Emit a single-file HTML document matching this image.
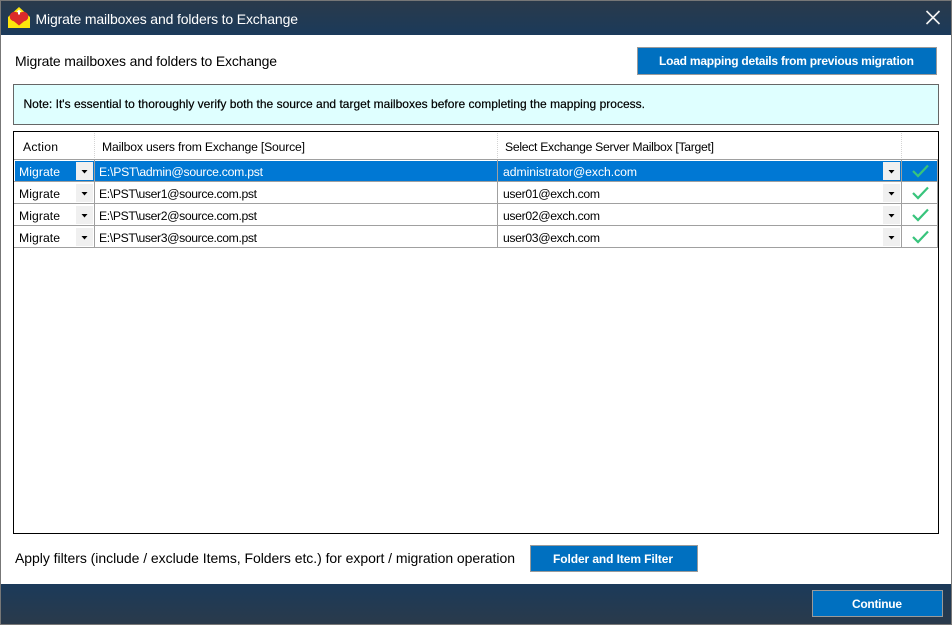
<!DOCTYPE html>
<html><head><meta charset="utf-8"><style>
html,body{margin:0;padding:0;background:#fff;width:952px;height:625px;overflow:hidden}
svg{display:block}
text{font-family:"Liberation Sans",sans-serif;font-size:12.2px;fill:#000}
.t{font-size:14px}
.b{font-size:12px;font-weight:bold;fill:#fff}
.w{fill:#fff}
</style></head><body>
<svg width="952" height="625" viewBox="0 0 952 625" xmlns="http://www.w3.org/2000/svg">
<defs>
<linearGradient id="g1" x1="0" y1="0" x2="0" y2="1"><stop offset="0" stop-color="#2a3a4b"/><stop offset="1" stop-color="#1b3a5a"/></linearGradient>
<linearGradient id="g2" x1="0" y1="0" x2="0" y2="1"><stop offset="0" stop-color="#1b3a5a"/><stop offset="1" stop-color="#2a3a4b"/></linearGradient>
</defs>
<rect width="952" height="625" fill="#fff"/>
<rect x="0.5" y="0.5" width="951" height="624" fill="none" stroke="#777"/>
<rect x="1" y="1" width="950" height="34" fill="url(#g1)"/>
<rect x="1" y="584" width="950" height="40" fill="url(#g2)"/>
<!-- icon -->
<polygon points="8,17 19,7 30,17 30,28 8,28" fill="#fde50c"/>
<circle cx="14.5" cy="16.5" r="4.8" fill="#dc2b2b"/>
<circle cx="23.5" cy="16.5" r="4.8" fill="#dc2b2b"/>
<polygon points="10,18 28,18 19,25.5" fill="#dc2b2b"/>
<rect x="14" y="12.5" width="10" height="6" fill="#dc2b2b"/>
<polygon points="19,9.5 21.4,12 20,12 20,14.5 18,14.5 18,12 16.6,12" fill="#fff"/>
<text class="t w" x="35.5" y="24" textLength="262.5">Migrate mailboxes and folders to Exchange</text>
<path d="M926.5 11 L939.5 24 M939.5 11 L926.5 24" stroke="#f2f2f2" stroke-width="1.6" fill="none"/>

<text class="t" x="15" y="66" textLength="262">Migrate mailboxes and folders to Exchange</text>
<rect x="637.5" y="47.5" width="299" height="27" fill="#0070c0" stroke="#9a9a9a"/>
<text class="b" x="659" y="65" textLength="255">Load mapping details from previous migration</text>

<rect x="13.5" y="84.5" width="925" height="40" fill="#dfffff" stroke="#666"/>
<text x="23.5" y="108" textLength="621.5" stroke="#000" stroke-width="0.2" style="font-size:12px">Note: It's essential to thoroughly verify both the source and target mailboxes before completing the mapping process.</text>

<!-- table -->
<rect x="13.5" y="131.5" width="925" height="402" fill="#fff" stroke="#000"/>
<path d="M94.5 133V159 M497.5 133V159 M901.5 133V159" stroke="#d4d4d4" stroke-dasharray="1 1"/>
<text x="23" y="151" textLength="35">Action</text>
<text x="102" y="151" textLength="203">Mailbox users from Exchange [Source]</text>
<text x="505" y="151" textLength="209">Select Exchange Server Mailbox [Target]</text>

<rect x="15" y="161" width="922" height="20" fill="#0078d4"/>
<path d="M14 159.5H938 M14 181.5H938 M14 203.5H938 M14 225.5H938 M14 247.5H938" stroke="#a0a0a0"/>
<path d="M94.5 160V248 M497.5 160V248 M901.5 160V248 M937.5 160V248" stroke="#a0a0a0"/>

<!-- row 1 -->
<rect x="76" y="162" width="17" height="18" fill="#f0f0f0"/>
<rect x="883" y="162" width="17" height="18" fill="#f0f0f0"/>
<text class="w" x="19" y="176" textLength="41">Migrate</text>
<text class="w" x="99" y="176" textLength="164">E:\PST\admin@source.com.pst</text>
<text class="w" x="503" y="176" textLength="134">administrator@exch.com</text>
<!-- row 2 -->
<rect x="76" y="184" width="17" height="18" fill="#f0f0f0"/>
<rect x="883" y="184" width="17" height="18" fill="#f0f0f0"/>
<text x="19" y="198" textLength="41">Migrate</text>
<text x="99" y="198" textLength="158">E:\PST\user1@source.com.pst</text>
<text x="503" y="198" textLength="97">user01@exch.com</text>
<!-- row 3 -->
<rect x="76" y="206" width="17" height="18" fill="#f0f0f0"/>
<rect x="883" y="206" width="17" height="18" fill="#f0f0f0"/>
<text x="19" y="220" textLength="41">Migrate</text>
<text x="99" y="220" textLength="158">E:\PST\user2@source.com.pst</text>
<text x="503" y="220" textLength="97">user02@exch.com</text>
<!-- row 4 -->
<rect x="76" y="228" width="17" height="18" fill="#f0f0f0"/>
<rect x="883" y="228" width="17" height="18" fill="#f0f0f0"/>
<text x="19" y="242" textLength="41">Migrate</text>
<text x="99" y="242" textLength="158">E:\PST\user3@source.com.pst</text>
<text x="503" y="242" textLength="97">user03@exch.com</text>
<!-- arrows -->
<g fill="#000">
<polygon points="81.5,170 87.5,170 84.5,173.5"/><polygon points="888.5,170 894.5,170 891.5,173.5"/>
<polygon points="81.5,192 87.5,192 84.5,195.5"/><polygon points="888.5,192 894.5,192 891.5,195.5"/>
<polygon points="81.5,214 87.5,214 84.5,217.5"/><polygon points="888.5,214 894.5,214 891.5,217.5"/>
<polygon points="81.5,236 87.5,236 84.5,239.5"/><polygon points="888.5,236 894.5,236 891.5,239.5"/>
</g>
<!-- checks -->
<g fill="none" stroke="#38c47c" stroke-width="2.2">
<path d="M913 171 L918 176 L928 165.5"/>
<path d="M913 193 L918 198 L928 187.5"/>
<path d="M913 215 L918 220 L928 209.5"/>
<path d="M913 237 L918 242 L928 231.5"/>
</g>

<text class="t" x="15" y="563" textLength="500">Apply filters (include / exclude Items, Folders etc.) for export / migration operation</text>
<rect x="530.5" y="545.5" width="167" height="26" fill="#0070c0" stroke="#9a9a9a"/>
<text class="b" x="553" y="563" textLength="120">Folder and Item Filter</text>
<rect x="812.5" y="590.5" width="130" height="26" fill="#0070c0" stroke="#9a9a9a"/>
<text class="b" x="852" y="608" textLength="50">Continue</text>
</svg>
</body></html>
